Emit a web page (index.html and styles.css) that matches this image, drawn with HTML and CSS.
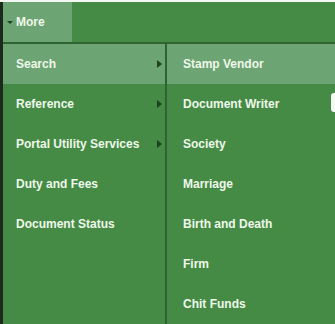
FILE: index.html
```html
<!DOCTYPE html>
<html lang="en">
<head>
  <meta charset="UTF-8" />
  <meta name="viewport" content="width=device-width, initial-scale=1.0"/>
  <title>Menu</title>
  <link rel="stylesheet" href="styles.css">
</head>
<body>
  <div class="frame">
    <nav class="navbar">
      <div class="nav-item active"><span class="caret"></span>More</div>
    </nav>

    <div class="dropdown">
      <ul class="menu menu-main">
        <li class="hover has-sub">Search</li>
        <li class="has-sub">Reference</li>
        <li class="has-sub">Portal Utility Services</li>
        <li>Duty and Fees</li>
        <li>Document Status</li>
      </ul>
      <ul class="menu menu-sub">
        <li class="hover">Stamp Vendor</li>
        <li>Document Writer</li>
        <li>Society</li>
        <li>Marriage</li>
        <li>Birth and Death</li>
        <li>Firm</li>
        <li>Chit Funds</li>
      </ul>
    </div>

    <div class="edge-box"></div>
  </div>
</body>
</html>
```

FILE: styles.css
```css
body {
  margin: 0;
  padding: 2px 0 0 0;
  background-color: #f4f7f2;
  font-family: 'Liberation Sans', Arial, sans-serif;
  overflow: hidden;
}

.frame {
  border-left: 3px solid #1c2a1d;
  height: 322px;
  position: relative;
  background-color: #458b45;
}

.navbar {
  height: 40px;
  background-color: #458b45;
  border-bottom: 2px solid #2f6332;
  display: flex;
}

.nav-item {
  display: flex;
  align-items: center;
  width: 56px;
  padding-left: 13px;
  color: #eef7ea;
  font-weight: bold;
  font-size: 12px;
}

.nav-item.active {
  background-color: #6da473;
}

.caret {
  width: 0;
  height: 0;
  border-left: 3px solid transparent;
  border-right: 3px solid transparent;
  border-top: 3px solid #1e4220;
  margin-left: -9px;
  margin-right: 3px;
}

.dropdown {
  display: flex;
}

.menu {
  list-style: none;
  margin: 0;
  padding: 0;
}

.menu li {
  height: 40px;
  display: flex;
  align-items: center;
  color: #eef7ea;
  font-weight: bold;
  font-size: 12px;
  position: relative;
}

.menu li.hover {
  background-color: #6da473;
}

.menu-main {
  width: 162px;
  border-right: 2px solid #2f6332;
  height: 280px;
}

.menu-main li {
  padding-left: 13px;
}

.menu-sub {
  flex: 1;
}

.menu-sub li {
  padding-left: 16px;
}

.has-sub::after {
  content: '';
  position: absolute;
  right: 3px;
  top: 16px;
  border-top: 4px solid transparent;
  border-bottom: 4px solid transparent;
  border-left: 5px solid #1e4220;
}

.edge-box {
  position: absolute;
  right: 0;
  top: 91px;
  width: 4px;
  height: 19px;
  background-color: #f6f8f4;
  border-radius: 3px 0 0 3px;
}
```
